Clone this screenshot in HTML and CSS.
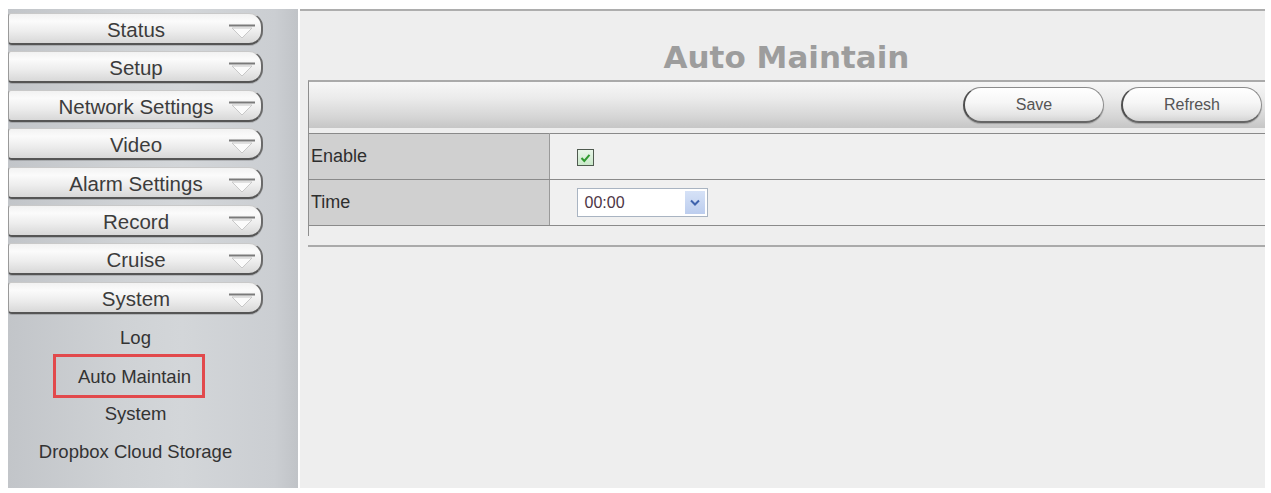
FILE: index.html
```html
<!DOCTYPE html>
<html>
<head>
<meta charset="utf-8">
<title>Auto Maintain</title>
<link rel="stylesheet" href="styles.css">
</head>
<body>
<div class="page">
  <aside class="sidebar">
    <nav class="menu">
      <div class="navbtn"><span></span><span class="label">Status</span><span class="arrow"><svg width="28" height="16" viewBox="0 0 28 16"><line x1="1" y1="1.5" x2="27" y2="1.5" stroke="#7a7a7a" stroke-width="2"/><path d="M4 4 L24 4 L14 14 Z" fill="#fbfbfb" stroke="#c8c8c8" stroke-width="1"/></svg></span></div>
      <div class="navbtn"><span></span><span class="label">Setup</span><span class="arrow"><svg width="28" height="16" viewBox="0 0 28 16"><line x1="1" y1="1.5" x2="27" y2="1.5" stroke="#7a7a7a" stroke-width="2"/><path d="M4 4 L24 4 L14 14 Z" fill="#fbfbfb" stroke="#c8c8c8" stroke-width="1"/></svg></span></div>
      <div class="navbtn"><span></span><span class="label">Network Settings</span><span class="arrow"><svg width="28" height="16" viewBox="0 0 28 16"><line x1="1" y1="1.5" x2="27" y2="1.5" stroke="#7a7a7a" stroke-width="2"/><path d="M4 4 L24 4 L14 14 Z" fill="#fbfbfb" stroke="#c8c8c8" stroke-width="1"/></svg></span></div>
      <div class="navbtn"><span></span><span class="label">Video</span><span class="arrow"><svg width="28" height="16" viewBox="0 0 28 16"><line x1="1" y1="1.5" x2="27" y2="1.5" stroke="#7a7a7a" stroke-width="2"/><path d="M4 4 L24 4 L14 14 Z" fill="#fbfbfb" stroke="#c8c8c8" stroke-width="1"/></svg></span></div>
      <div class="navbtn"><span></span><span class="label">Alarm Settings</span><span class="arrow"><svg width="28" height="16" viewBox="0 0 28 16"><line x1="1" y1="1.5" x2="27" y2="1.5" stroke="#7a7a7a" stroke-width="2"/><path d="M4 4 L24 4 L14 14 Z" fill="#fbfbfb" stroke="#c8c8c8" stroke-width="1"/></svg></span></div>
      <div class="navbtn"><span></span><span class="label">Record</span><span class="arrow"><svg width="28" height="16" viewBox="0 0 28 16"><line x1="1" y1="1.5" x2="27" y2="1.5" stroke="#7a7a7a" stroke-width="2"/><path d="M4 4 L24 4 L14 14 Z" fill="#fbfbfb" stroke="#c8c8c8" stroke-width="1"/></svg></span></div>
      <div class="navbtn"><span></span><span class="label">Cruise</span><span class="arrow"><svg width="28" height="16" viewBox="0 0 28 16"><line x1="1" y1="1.5" x2="27" y2="1.5" stroke="#7a7a7a" stroke-width="2"/><path d="M4 4 L24 4 L14 14 Z" fill="#fbfbfb" stroke="#c8c8c8" stroke-width="1"/></svg></span></div>
      <div class="navbtn"><span></span><span class="label">System</span><span class="arrow"><svg width="28" height="16" viewBox="0 0 28 16"><line x1="1" y1="1.5" x2="27" y2="1.5" stroke="#7a7a7a" stroke-width="2"/><path d="M4 4 L24 4 L14 14 Z" fill="#fbfbfb" stroke="#c8c8c8" stroke-width="1"/></svg></span></div>
    </nav>
    <ul class="submenu">
      <li class="subitem">Log</li>
      <li class="subitem"><span class="current">Auto Maintain</span></li>
      <li class="subitem">System</li>
      <li class="subitem">Dropbox Cloud Storage</li>
    </ul>
  </aside>

  <main class="main">
    <h1 class="title">Auto Maintain</h1>
    <div class="panel">
      <div class="toolbar">
        <button class="pill">Save</button>
        <button class="pill">Refresh</button>
      </div>
      <table class="form">
        <tr>
          <td class="key">Enable</td>
          <td class="val">
            <span class="check"><svg width="11" height="10" viewBox="0 0 11 10"><path d="M1.5 5 L4.3 8 L9.5 1.8" fill="none" stroke="#2f9a2f" stroke-width="2"/></svg></span>
          </td>
        </tr>
        <tr>
          <td class="key">Time</td>
          <td class="val">
            <div class="select"><span class="sel-text">00:00</span><span class="sel-btn"><svg width="10" height="7" viewBox="0 0 10 7"><path d="M1 1.5 L5 5.5 L9 1.5" fill="none" stroke="#3f63ad" stroke-width="2"/></svg></span></div>
          </td>
        </tr>
      </table>
      <div class="panel-foot"></div>
    </div>
    <div class="rule"></div>
  </main>
</div>
</body>
</html>
```

FILE: styles.css
```css
* { box-sizing: border-box; }

html, body {
  margin: 0;
  padding: 0;
  background: #ffffff;
}

body {
  font-family: "Liberation Sans", Arial, sans-serif;
  color: #333333;
}

.page {
  display: flex;
  gap: 2px;
  padding: 9px 6px 0 8px;
}

/* ---------- sidebar ---------- */
.sidebar {
  width: 290px;
  height: 479px;
  flex: none;
  padding-top: 4px;
  background: linear-gradient(90deg, #c2c5c9 0%, #cfd2d5 40%, #d3d6d9 60%, #cbced2 92%, #c0c3c7 100%);
}

.menu {
  display: flex;
  flex-direction: column;
  gap: 6.4px;
  width: 255px;
}

.navbtn {
  height: 32px;
  display: grid;
  grid-template-columns: 30px 1fr 34px;
  align-items: center;
  background: linear-gradient(180deg, #f2f2f2 0%, #fbfbfb 25%, #ededed 60%, #d8d8d8 100%);
  border-top: 1px solid #c9c9c9;
  border-left: 1px solid #9a9a9a;
  border-right: 2px solid #6a6a6a;
  border-bottom: 2px solid #555555;
  border-radius: 3px 14px 14px 4px;
  box-shadow: 0 1px 0 rgba(0,0,0,0.15);
}

.navbtn .label {
  text-align: center;
  font-size: 20.5px;
  color: #3c3c3c;
  padding-top: 3px;
  white-space: nowrap;
  margin-right: -6px;
}

.navbtn .arrow {
  display: flex;
  justify-content: flex-end;
  align-self: start;
  padding-top: 10px;
  padding-right: 5px;
}

.navbtn .arrow svg { display: block; }

.submenu {
  list-style: none;
  margin: 5px 0 0;
  padding: 0;
  width: 255px;
}

.subitem {
  height: 38px;
  display: flex;
  align-items: center;
  justify-content: center;
  font-size: 18.5px;
  color: #333333;
  padding-top: 1px;
}

.current {
  flex: none;
  height: 44px;
  display: flex;
  align-items: center;
  padding: 1px 11px 0 22px;
  margin-right: 13px;
  border: 3px solid #e2494c;
}

/* ---------- main ---------- */
.main {
  width: 965px;
  height: 479px;
  flex: none;
  background: #eeeeee;
  border-top: 2px solid #adadad;
  padding-left: 8px;
}

.title {
  margin: 0;
  height: 69px;
  padding-top: 28px;
  text-align: center;
  font-family: "DejaVu Sans", Verdana, sans-serif;
  font-weight: bold;
  font-size: 31px;
  line-height: 36px;
  color: #9d9d9d;
}

.panel {
  border-top: 2px solid #aaaaaa;
  border-left: 1px solid #8e8e8e;
}

.toolbar {
  height: 46px;
  display: flex;
  justify-content: flex-end;
  align-items: center;
  gap: 17px;
  padding-right: 3px;
  background: linear-gradient(180deg, #f7f7f7 0%, #ebebeb 35%, #d6d6d6 75%, #c6c6c6 100%);
}

.pill {
  width: 141px;
  height: 36px;
  border-radius: 18px;
  background: linear-gradient(180deg, #ffffff 0%, #f6f6f6 45%, #e6e6e6 80%, #d4d4d4 100%);
  border: 1px solid #8c8c8c;
  border-left: 2px solid #4e4e4e;
  border-bottom: 2px solid #666666;
  box-shadow: 0 1px 1px rgba(0,0,0,0.2);
  font-family: "Liberation Sans", Arial, sans-serif;
  font-size: 16px;
  color: #555555;
  padding: 0;
}

.form {
  width: 100%;
  margin-top: 5px;
  border-collapse: collapse;
}

.form td {
  height: 46px;
  border-top: 1px solid #8a8a8a;
  border-bottom: 1px solid #8a8a8a;
  padding: 0;
  font-size: 18px;
  vertical-align: middle;
}

.form .key {
  width: 240px;
  background: #d0d0d0;
  color: #2e2e2e;
  padding-left: 2px;
  border-right: 1px solid #9a9a9a;
}

.form .val {
  background: #f0f0f0;
  padding-left: 27px;
}

.check {
  width: 17px;
  height: 17px;
  display: flex;
  align-items: center;
  justify-content: center;
  border: 1px solid #4f5a4f;
  background: linear-gradient(180deg, #e9f6e9, #c9e8c9);
  margin-top: 2px;
}

.check svg { display: block; }

.select {
  width: 131px;
  height: 29px;
  display: flex;
  align-items: center;
  justify-content: space-between;
  background: #ffffff;
  border: 1px solid #a9b4c2;
  padding: 2px 2px 2px 7px;
}

.sel-text {
  font-size: 16px;
  color: #4d3545;
}

.sel-btn {
  width: 20px;
  height: 100%;
  display: flex;
  align-items: center;
  justify-content: center;
  background: linear-gradient(180deg, #d6e2f7, #bccdee);
}

.sel-btn svg { display: block; }

.panel-foot {
  height: 10px;
}

.rule {
  margin-top: 9px;
  border-top: 2px solid #aaaaaa;
}
```
